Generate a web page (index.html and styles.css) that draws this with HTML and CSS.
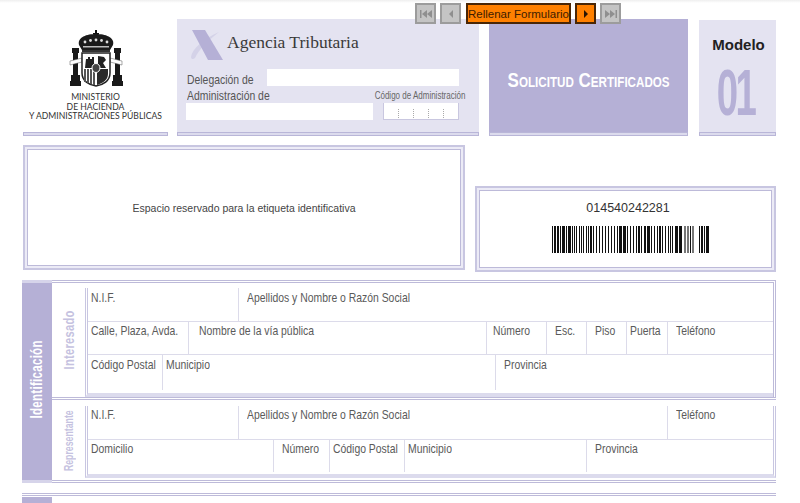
FILE: index.html
```html
<!DOCTYPE html>
<html lang="es">
<head>
    <meta charset="UTF-8">
    <title>Solicitud Certificados - Modelo 01</title>
    <link rel="stylesheet" href="styles.css">
</head>
<body>
    <div class="toolbar">
        <button class="tool-btn off">
            <svg width="14" height="10" viewBox="0 0 14 10"><path d="M1 1h1.500v8H1zM8 1v8L3 5zM13 1v8L8 5z"/></svg>
        </button>
        <button class="tool-btn off">
            <svg width="14" height="10" viewBox="0 0 14 10"><path d="M9 1v8L5 5z"/></svg>
        </button>
        <button class="tool-btn on wide">Rellenar Formulario</button>
        <button class="tool-btn on">
            <svg width="14" height="10" viewBox="0 0 14 10"><path d="M5 1v8l4-4z"/></svg>
        </button>
        <button class="tool-btn off">
            <svg width="14" height="10" viewBox="0 0 14 10"><path d="M1 1v8l5-4zM6 1v8l5-4zM11.500 1H13v8h-1.500z"/></svg>
        </button>
    </div>

    <div class="page">
        <!-- Cabecera -->
        <div class="top-row">
            <div class="ministry strip">
                <svg class="crest" width="54" height="57" viewBox="0 0 54 57">
                    <path d="M26 0h2v3h2v1.500h-2V7h-2V4.500h-2V3h2z" fill="#111"/>
                    <path d="M10 15C8 7 18 4 27 4s19 3 17 11l-3 5H13z" fill="#1a1a1a"/>
                    <path d="M13 20h28v2H13z" fill="#333"/>
                    <g fill="#ddd"><circle cx="16" cy="12" r="1.400"/><circle cx="21.500" cy="10.500" r="1.400"/><circle cx="27" cy="10" r="1.400"/><circle cx="32.500" cy="10.500" r="1.400"/><circle cx="38" cy="12" r="1.400"/></g>
                    <path d="M14 16h26v1.500H14z" fill="#bbb"/>
                    <path d="M3 18h7v5H9v22h2v6h1v5H1v-5h1v-6h2V23H3z" fill="#1a1a1a"/>
                    <path d="M45 18h7v5h-1v22h2v6h1v5H43v-5h1v-6h2V23h-1z" fill="#1a1a1a"/>
                    <path d="M1 31l12-3v4L1 35zM53 31l-12-3v4l12 3z" fill="#fff" stroke="#555" stroke-width=".5"/>
                    <path d="M13 23h28v20c0 8-7 12-14 13-7-1-14-5-14-13z" fill="#fff" stroke="#222" stroke-width="1.500"/>
                    <path d="M17 29h2v-2h2v2h2v-2h2v11h-9z" fill="#222"/>
                    <path d="M29 26l6 1 2 3-3 3 3 5h-8z" fill="#222"/>
                    <path d="M15 39h2v13h-2zM18 39h2v14h-2zM21 39h2v15h-2zM24 39h2v16h-2z" fill="#555"/>
                    <path d="M28 39h11v5c0 6-5 9-11 11z" fill="#2a2a2a"/>
                    <ellipse cx="27" cy="38" rx="4" ry="4.500" fill="#444" stroke="#fff"/>
                </svg>
                <p class="ministry-name">MINISTERIO<br>DE HACIENDA<br>Y ADMINISTRACIONES PÚBLICAS</p>
            </div>

            <div class="agency strip">
                <div class="agency-head">
                    <svg width="34" height="30" viewBox="0 0 34 30">
                        <path d="M2 27C3 19 14 9 30 2C19 11 10 19 6 28C4 30 2 29 2 27z" fill="#d4d2e8"/>
                        <path d="M3 0h13l18 30H19z" fill="#b5b0d6"/>
                    </svg>
                    <span class="agency-name">Agencia Tributaria</span>
                </div>
                <div class="agency-line">
                    <span class="agency-label"><span class="squeeze">Delegación de</span></span>
                    <div class="blank blank-delegation"></div>
                </div>
                <div class="agency-line labels">
                    <span class="agency-label"><span class="squeeze">Administración de</span></span>
                    <span class="code-label">Código de Administración</span>
                </div>
                <div class="agency-line">
                    <div class="blank blank-admin"></div>
                    <div class="code-box">
                        <span></span><span></span><span></span><span></span><span></span>
                    </div>
                </div>
            </div>

            <div class="request strip">
                <span>Solicitud Certificados</span>
            </div>

            <div class="model strip">
                <span class="model-word">Modelo</span>
                <span class="model-number">01</span>
            </div>
        </div>

        <!-- Etiqueta y codigo de barras -->
        <div class="label-row">
            <div class="label-box framed">Espacio reservado para la etiqueta identificativa</div>
            <div class="barcode-box framed">
                <div class="barcode-number">014540242281</div>
                <svg class="barcode" width="157" height="27" viewBox="0 0 157 27">
                    <path fill="#111" d="M0 0h1v27H0zM2 0h2v27H2zM5 0h2v27H5zM8 0h1v27H8zM10 0h3v27h-3zM14 0h1v27h-1zM16 0h3v27h-3zM20 0h1v27h-1zM22 0h1v27h-1zM24 0h1v27h-1zM27 0h1v27h-1zM29 0h1v27h-1zM31 0h1v27h-1zM34 0h1v27h-1zM36 0h1v27h-1zM38 0h2v27h-2zM41 0h1v27h-1zM44 0h1v27h-1zM47 0h1v27h-1zM50 0h1v27h-1zM53 0h1v27h-1zM56 0h1v27h-1zM59 0h1v27h-1zM62 0h1v27h-1zM65 0h1v27h-1zM67 0h3v27h-3zM71 0h3v27h-3zM75 0h1v27h-1zM78 0h1v27h-1zM81 0h1v27h-1zM84 0h1v27h-1zM86 0h2v27h-2zM89 0h1v27h-1zM92 0h2v27h-2zM95 0h3v27h-3zM99 0h1v27h-1zM102 0h1v27h-1zM105 0h1v27h-1zM107 0h2v27h-2zM110 0h1v27h-1zM113 0h1v27h-1zM116 0h1v27h-1zM118 0h1v27h-1zM120 0h1v27h-1zM123 0h3v27h-3zM127 0h3v27h-3zM138 0h1v27h-1zM147 0h1v27h-1zM149 0h2v27h-2zM152 0h1v27h-1zM154 0h3v27h-3z"/>
                    <path fill="#777" d="M132 0h2v27h-2zM135 0h2v27h-2zM140 0h2v27h-2z"/>
                </svg>
            </div>
        </div>

        <!-- Identificacion -->
        <div class="section">
            <div class="side"><span>Identificación</span></div>
            <div class="blocks">
                <div class="block block-person">
                    <div class="block-title"><span>Interesado</span></div>
                    <div class="fields">
                        <div class="field-row first row-nif">
                            <div class="cell"><span class="squeeze">N.I.F.</span></div>
                            <div class="cell"><span class="squeeze">Apellidos y Nombre o Razón Social</span></div>
                        </div>
                        <div class="field-row row-street">
                            <div class="cell"><span class="squeeze">Calle, Plaza, Avda.</span></div>
                            <div class="cell roomy"><span class="squeeze">Nombre de la vía pública</span></div>
                            <div class="cell snug"><span class="squeeze">Número</span></div>
                            <div class="cell"><span class="squeeze">Esc.</span></div>
                            <div class="cell"><span class="squeeze">Piso</span></div>
                            <div class="cell tight"><span class="squeeze">Puerta</span></div>
                            <div class="cell"><span class="squeeze">Teléfono</span></div>
                        </div>
                        <div class="field-row row-town">
                            <div class="cell"><span class="squeeze">Código Postal</span></div>
                            <div class="cell tight"><span class="squeeze">Municipio</span></div>
                            <div class="cell"><span class="squeeze">Provincia</span></div>
                        </div>
                    </div>
                </div>
                <div class="block block-agent">
                    <div class="block-title narrow"><span>Representante</span></div>
                    <div class="fields">
                        <div class="field-row first row-agent-nif">
                            <div class="cell"><span class="squeeze">N.I.F.</span></div>
                            <div class="cell"><span class="squeeze">Apellidos y Nombre o Razón Social</span></div>
                            <div class="cell"><span class="squeeze">Teléfono</span></div>
                        </div>
                        <div class="field-row row-agent-home">
                            <div class="cell"><span class="squeeze">Domicilio</span></div>
                            <div class="cell"><span class="squeeze">Número</span></div>
                            <div class="cell tight"><span class="squeeze">Código Postal</span></div>
                            <div class="cell tight"><span class="squeeze">Municipio</span></div>
                            <div class="cell"><span class="squeeze">Provincia</span></div>
                        </div>
                    </div>
                </div>
            </div>
        </div>

        <!-- Siguiente seccion, cortada por la ventana -->
        <div class="next-section">
            <div class="side"></div>
        </div>
    </div>
</body>
</html>
```

FILE: styles.css
```css
* {
    margin: 0;
    padding: 0;
    box-sizing: border-box;
}

html, body {
    height: 503px;
    overflow: hidden;
}

body {
    position: relative;
    background: linear-gradient(#efefef, #ffffff 3px);
    color: #555;
    font-family: "Liberation Sans", Arial, sans-serif;
    font-size: 12px;
}

.page {
    width: 800px;
    padding: 19px 24px 0 22px;
}

/* No narrow font is installed, so the form's condensed labels are squeezed */
.squeeze {
    display: inline-block;
    transform: scaleX(0.8);
    transform-origin: left center;
    white-space: nowrap;
}

/* Toolbar over the form */
.toolbar {
    position: absolute;
    top: 3px;
    left: 415px;
    display: flex;
    gap: 4px;
    z-index: 10;
}

.tool-btn {
    width: 21px;
    height: 21px;
    display: flex;
    align-items: center;
    justify-content: center;
    border: 2px solid #9c9c9c;
    font-family: "Liberation Sans", Arial, sans-serif;
    font-size: 11.5px;
}

.tool-btn.off {
    background-color: #c4c4c4;
}

.tool-btn.off svg {
    fill: #8f8f8f;
}

.tool-btn.on {
    background-color: #ff8000;
    border-color: #4a2606;
    color: #3d1c00;
}

.tool-btn.on svg {
    fill: #2a1503;
}

.tool-btn.wide {
    width: 105px;
    margin-left: 1px;
    white-space: nowrap;
}

/* Top row */
.top-row {
    display: flex;
    height: 117px;
    align-items: stretch;
}

.strip {
    border-bottom: 4px solid #b9b6d8;
    position: relative;
}

.strip::after {
    content: "";
    position: absolute;
    left: 1px;
    right: 1px;
    bottom: -3px;
    height: 2px;
    background-color: #dcdbed;
}

.ministry {
    width: 145px;
    margin-left: 1px;
    margin-right: 9px;
    display: flex;
    flex-direction: column;
    align-items: center;
    padding-top: 11px;
}

.crest {
    display: block;
}

.ministry-name {
    font-family: Lato, "Liberation Sans", sans-serif;
    font-size: 8.6px;
    line-height: 9.7px;
    color: #333;
    text-align: center;
    margin-top: 6px;
    white-space: nowrap;
}

.agency {
    width: 302px;
    margin-right: 10px;
    background-color: #e4e3f1;
    padding: 11px 0 0 9px;
}

.agency-head {
    display: flex;
    align-items: flex-start;
    gap: 4px;
    height: 39px;
    margin-left: 3px;
}

.agency-name {
    font-family: "Liberation Serif", "Times New Roman", serif;
    font-size: 17.5px;
    color: #3a3a3a;
    line-height: 24px;
}

.agency-line {
    display: flex;
    align-items: center;
}

.agency-label {
    height: 17px;
    padding-top: 2px;
    font-size: 13px;
    color: #555;
    line-height: 17px;
    width: 80px;
    margin-left: 1px;
}

.labels .agency-label {
    padding-top: 1px;
}

.blank {
    background-color: #ffffff;
    height: 17px;
}

.blank-delegation {
    width: 192px;
}

.blank-admin {
    width: 187px;
}

.labels {
    justify-content: space-between;
    padding-right: 14px;
}

.code-label {
    font-size: 10px;
    color: #666;
    white-space: nowrap;
    padding-top: 2px;
    transform: scaleX(0.8);
    transform-origin: right center;
}

.code-box {
    width: 76px;
    height: 17px;
    margin-left: 10px;
    background-color: #ffffff;
    border: 1px solid #c9c7e0;
    border-top: none;
    display: flex;
}

.code-box span {
    flex: 1;
    border-left: 1px dotted #aaa;
    margin: 6px 0 1px;
}

.code-box span:first-child {
    border-left: none;
}

.request {
    width: 199px;
    margin-right: 11px;
    background-color: #b5b0d6;
    display: flex;
    align-items: center;
    justify-content: center;
    padding-top: 8px;
    font-weight: bold;
    font-size: 20.5px;
    font-variant: small-caps;
    color: #ffffff;
    white-space: nowrap;
}

.request span {
    transform: scaleX(0.83);
}

.model {
    width: 77px;
    margin-top: 1px;
    background-color: #e4e3f1;
    display: flex;
    flex-direction: column;
    align-items: center;
}

.model-word {
    font-weight: bold;
    font-size: 15px;
    line-height: 18px;
    color: #222;
    margin-top: 16px;
    margin-left: 2px;
}

.model-number {
    font-weight: bold;
    font-size: 64px;
    line-height: 46px;
    letter-spacing: -4px;
    color: #b5b0d6;
    margin-top: 16px;
    margin-right: 3px;
    transform: scaleX(0.6);
}

/* Label and barcode */
.framed {
    border: 2px solid #c8c6e1;
    box-shadow: inset 0 0 0 2px #ecebf6, inset 0 0 0 3px #bdbad9;
}

.label-row {
    display: flex;
    justify-content: space-between;
    height: 127px;
    margin-top: 9px;
    padding-left: 1px;
}

.label-box {
    width: 442px;
    height: 125px;
    display: flex;
    align-items: center;
    justify-content: center;
    font-size: 10.5px;
    color: #444;
}

.barcode-box {
    width: 301px;
    height: 86px;
    margin-top: 41px;
    display: flex;
    flex-direction: column;
    align-items: center;
}

.barcode-number {
    font-size: 12.5px;
    color: #333;
    margin-top: 13px;
    margin-left: 5px;
    line-height: 14px;
}

.barcode {
    display: block;
    margin-top: 11px;
    margin-left: 10px;
}

/* Identificacion */
.section {
    display: flex;
    margin-top: 8px;
}

.side {
    width: 30px;
    background-color: #b5b0d6;
    border-top: 3px solid #d6d4ea;
    border-bottom: 3px solid #d6d4ea;
    display: flex;
    align-items: center;
    justify-content: center;
}

.side span {
    writing-mode: vertical-rl;
    transform: rotate(180deg) scaleY(0.72);
    font-weight: bold;
    font-size: 16px;
    letter-spacing: 0.4px;
    color: #ffffff;
    margin-top: -4px;
}

.blocks {
    flex: 1;
}

.block {
    display: flex;
    position: relative;
}

.block-person {
    height: 117px;
    border-top: 3px double #bdbad9;
    border-right: 3px double #bdbad9;
    padding-top: 5px;
}

.block-agent {
    height: 86px;
    border-top: 3px double #bdbad9;
    border-bottom: 3px double #bdbad9;
    padding-top: 6px;
}

.block-title {
    width: 33px;
    display: flex;
    align-items: center;
    justify-content: center;
    padding-bottom: 6px;
}

.block-title span {
    writing-mode: vertical-rl;
    transform: rotate(180deg) scaleY(0.8);
    font-weight: bold;
    font-size: 14px;
    letter-spacing: 0.3px;
    color: #c5c2e0;
}

.block-title.narrow {
    padding-bottom: 4px;
}

.block-title.narrow span {
    font-size: 12px;
    letter-spacing: 0;
    transform: rotate(180deg) scaleY(0.73);
}

.fields {
    flex: 1;
    border-left: 3px double #c8c6e1;
    border-bottom: 4px solid #dcdbed;
}

.block-agent .fields {
    margin-bottom: 2px;
    border-right: 3px double #c8c6e1;
}

.field-row {
    display: grid;
    border-top: 1px solid #dcdbea;
    height: 33px;
}

.field-row.first {
    border-top: none;
}

.row-nif {
    grid-template-columns: 150px 1fr;
}

.row-street {
    grid-template-columns: 100px 298px 60px 40px 40px 41px 1fr;
}

.row-town {
    grid-template-columns: 74px 333px 1fr;
    height: 36px;
}

.row-agent-nif {
    grid-template-columns: 150px 429px 1fr;
}

.row-agent-home {
    grid-template-columns: 185px 56px 75px 182px 1fr;
}

.cell {
    border-left: 1px solid #dcdbea;
    padding: 1px 0 0 8px;
    font-size: 13px;
    line-height: 18px;
    color: #5a5a5a;
}

.row-street .cell,
.block-agent .cell {
    padding-top: 0;
}

.cell:first-child {
    border-left: none;
    padding-left: 3px;
}

.cell.roomy {
    padding-left: 10px;
}

.cell.snug {
    padding-left: 6px;
}

.cell.tight {
    padding-left: 3px;
}

/* Next section */
.next-section {
    display: flex;
    height: 20px;
    margin-top: 10px;
    border-top: 3px double #bdbad9;
}

.next-section .side {
    border-top: none;
    margin-top: 1px;
}
```
